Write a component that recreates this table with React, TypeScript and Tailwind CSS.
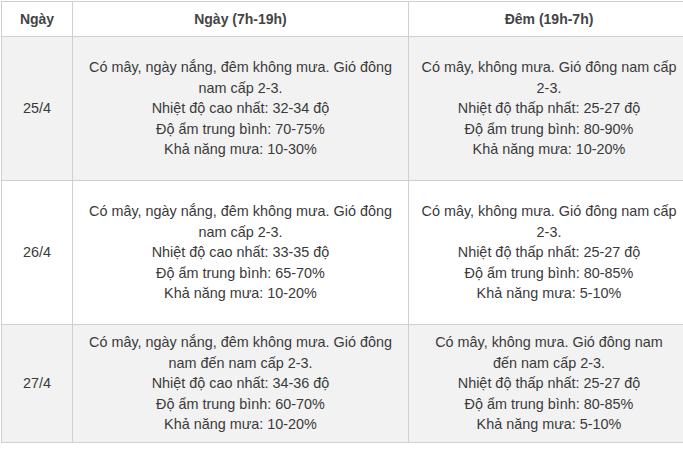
const ROWS = [
  {
    date: "25/4",
    bg: "bg-[#f2f2f2]",
    h: "h-[144px]",
    day: [
      "Có mây, ngày nắng, đêm không mưa. Gió đông",
      "nam cấp 2-3.",
      "Nhiệt độ cao nhất: 32-34 độ",
      "Độ ẩm trung bình: 70-75%",
      "Khả năng mưa: 10-30%",
    ],
    night: [
      "Có mây, không mưa. Gió đông nam cấp",
      "2-3.",
      "Nhiệt độ thấp nhất: 25-27 độ",
      "Độ ẩm trung bình: 80-90%",
      "Khả năng mưa: 10-20%",
    ],
  },
  {
    date: "26/4",
    bg: "bg-white",
    h: "h-[144px]",
    day: [
      "Có mây, ngày nắng, đêm không mưa. Gió đông",
      "nam cấp 2-3.",
      "Nhiệt độ cao nhất: 33-35 độ",
      "Độ ẩm trung bình: 65-70%",
      "Khả năng mưa: 10-20%",
    ],
    night: [
      "Có mây, không mưa. Gió đông nam cấp",
      "2-3.",
      "Nhiệt độ thấp nhất: 25-27 độ",
      "Độ ẩm trung bình: 80-85%",
      "Khả năng mưa: 5-10%",
    ],
  },
  {
    date: "27/4",
    bg: "bg-[#f2f2f2]",
    h: "h-[118px]",
    day: [
      "Có mây, ngày nắng, đêm không mưa. Gió đông",
      "nam đến nam cấp 2-3.",
      "Nhiệt độ cao nhất: 34-36 độ",
      "Độ ẩm trung bình: 60-70%",
      "Khả năng mưa: 10-20%",
    ],
    night: [
      "Có mây, không mưa. Gió đông nam",
      "đến nam cấp 2-3.",
      "Nhiệt độ thấp nhất: 25-27 độ",
      "Độ ẩm trung bình: 80-85%",
      "Khả năng mưa: 5-10%",
    ],
  },
];

const cell =
  "flex flex-col items-center justify-center border-r border-b border-[#cfcfcf] text-center";

function Lines({ lines }: { lines: string[] }) {
  return (
    <>
      {lines.map((l, i) => (
        <span key={i} className="block whitespace-nowrap">
          {l}
        </span>
      ))}
    </>
  );
}

export default function App() {
  return (
    <div
      className="h-[449px] w-[683px] overflow-hidden bg-white pl-px pt-px text-[14.4px] leading-[20.5px] text-[#3a3a3a]"
      style={{ fontFamily: '"Liberation Sans", Arial, sans-serif' }}
    >
      <div className="grid w-[688px] grid-cols-[71px_336px_281px] border-l border-t border-[#cfcfcf]">
        <div className={`${cell} h-[35px] text-[14px] font-bold text-[#444]`}>Ngày</div>
        <div className={`${cell} h-[35px] text-[14px] font-bold text-[#444]`}>Ngày (7h-19h)</div>
        <div className={`${cell} h-[35px] text-[14px] font-bold text-[#444]`}>Đêm (19h-7h)</div>
        {ROWS.map((r) => (
          <div key={r.date} className="contents">
            <div className={`${cell} ${r.bg} ${r.h}`}>{r.date}</div>
            <div className={`${cell} ${r.bg} ${r.h}`}>
              <Lines lines={r.day} />
            </div>
            <div className={`${cell} ${r.bg} ${r.h}`}>
              <Lines lines={r.night} />
            </div>
          </div>
        ))}
      </div>
    </div>
  );
}
